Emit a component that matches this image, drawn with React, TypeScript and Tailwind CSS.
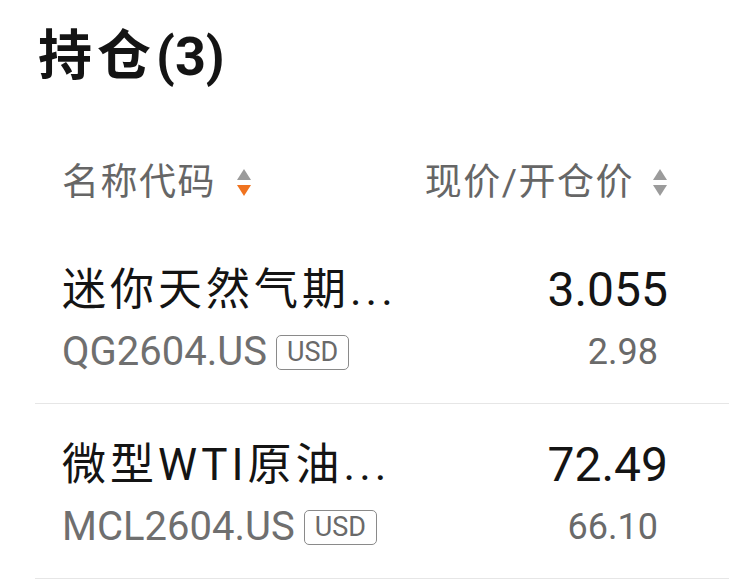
import React from "react";

type Position = {
  name: string;
  code: string;
  currency: string;
  last: string;
  open: string;
};

const positions: Position[] = [
  { name: "迷你天然气期...", code: "QG2604.US", currency: "USD", last: "3.055", open: "2.98" },
  { name: "微型WTI原油...", code: "MCL2604.US", currency: "USD", last: "72.49", open: "66.10" },
];

function SortIcon({ active }: { active?: "up" | "down" }) {
  return (
    <svg viewBox="0 0 16 30" className="h-[30px] w-[16px] shrink-0">
      <path d="M1 12 L8 1 L15 12 Z" fill={active === "up" ? "#f0731f" : "#9b9b9b"} />
      <path d="M1 17 L15 17 L8 28 Z" fill={active === "down" ? "#f0731f" : "#9b9b9b"} />
    </svg>
  );
}

function PositionRow({ p }: { p: Position }) {
  return (
    <div className="border-b-[1.5px] border-[#e6e6e6] pt-[36px] pb-[29px] pl-[27px] pr-[61px]">
      <div className="flex items-center justify-between">
        <span className="text-[44px] leading-[50px] tracking-[4px] text-[#141414]">{p.name}</span>
        <span className="text-[48px] leading-[50px] text-[#141414]">{p.last}</span>
      </div>
      <div className="mt-[15px] flex items-center justify-between">
        <div className="flex items-center gap-[9px]">
          <span className="text-[40px] leading-[44px] text-[#6f6f6f]">{p.code}</span>
          <span className="flex h-[35px] items-center rounded-[5px] border-[1.5px] border-[#8a8a8a] px-[10px] text-[27px] leading-none text-[#6a6a6a]">
            {p.currency}
          </span>
        </div>
        <span className="mr-[10px] text-[36px] leading-[44px] text-[#6a6a6a]">{p.open}</span>
      </div>
    </div>
  );
}

export default function App() {
  return (
    <div className="min-h-screen bg-white font-['Roboto','Noto_Sans_CJK_SC',sans-serif]">
      <div className="pt-[27px] pl-[38px]">
        <h1 className="text-[54px] font-bold leading-[60px] text-[#141414]">
          <span className="tracking-[5px]">持仓</span>(3)
        </h1>
      </div>

      <div className="ml-[35px]">
        <div className="mt-[66px] mb-[16px] flex h-[60px] items-center justify-between pl-[27px] pr-[61px] text-[37px] tracking-[1.5px] text-[#666666]">
          <div className="flex items-center gap-[20px]">
            <span>名称代码</span>
            <SortIcon active="down" />
          </div>
          <div className="flex items-center gap-[18px]">
            <span>现价/开仓价</span>
            <SortIcon />
          </div>
        </div>

        {positions.map((p) => (
          <PositionRow key={p.code} p={p} />
        ))}
      </div>
    </div>
  );
}
